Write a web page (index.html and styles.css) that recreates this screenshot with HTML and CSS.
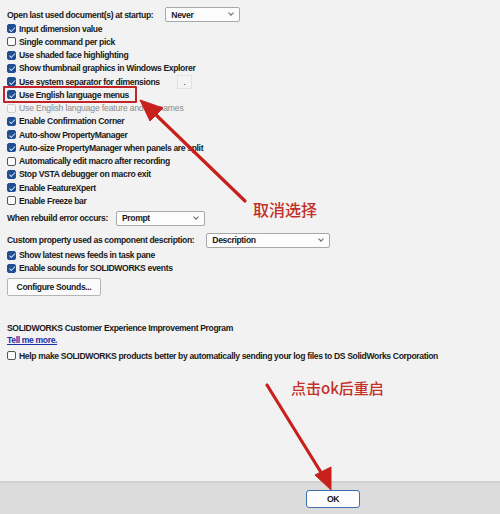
FILE: index.html
```html
<!DOCTYPE html>
<html>
<head>
<meta charset="utf-8">
<link rel="stylesheet" href="styles.css">
</head>
<body>
<div class="window">
  <div class="main">
    <div class="row field">
      <span class="label">Open last used document(s) at startup:</span>
      <span class="select sel-never">Never<span class="caret"></span></span>
    </div>
    <div class="row"><span class="cb on"></span>Input dimension value</div>
    <div class="row"><span class="cb"></span>Single command per pick</div>
    <div class="row"><span class="cb on"></span>Use shaded face highlighting</div>
    <div class="row"><span class="cb on"></span>Show thumbnail graphics in Windows Explorer</div>
    <div class="row"><span class="cb on"></span>Use system separator for dimensions<span class="sepbox">.</span></div>
    <div class="row"><span class="hl"><span class="cb on"></span>Use English language menus</span></div>
    <div class="row disabled"><span class="cb off"></span>Use English language feature and file names</div>
    <div class="row"><span class="cb on"></span>Enable Confirmation Corner</div>
    <div class="row"><span class="cb on"></span>Auto-show PropertyManager</div>
    <div class="row"><span class="cb on"></span>Auto-size PropertyManager when panels are split</div>
    <div class="row"><span class="cb"></span>Automatically edit macro after recording</div>
    <div class="row"><span class="cb on"></span>Stop VSTA debugger on macro exit</div>
    <div class="row"><span class="cb on"></span>Enable FeatureXpert</div>
    <div class="row"><span class="cb"></span>Enable Freeze bar</div>
    <div class="row field rebuild">
      <span class="label">When rebuild error occurs:</span>
      <span class="select sel-prompt">Prompt<span class="caret"></span></span>
    </div>
    <div class="row field custom">
      <span class="label">Custom property used as component description:</span>
      <span class="select sel-desc">Description<span class="caret"></span></span>
    </div>
    <div class="row"><span class="cb on"></span>Show latest news feeds in task pane</div>
    <div class="row"><span class="cb on"></span>Enable sounds for SOLIDWORKS events</div>
    <div class="btnrow"><span class="btn">Configure Sounds...</span></div>

    <div class="ceip">
      <div class="title">SOLIDWORKS Customer Experience Improvement Program</div>
      <div class="link">Tell me more.</div>
      <div class="row"><span class="cb"></span>Help make SOLIDWORKS products better by automatically sending your log files to DS SolidWorks Corporation</div>
    </div>
  </div>
  <div class="footer">
    <span class="ok">OK</span>
  </div>

  <div class="note note1">取消选择</div>
  <div class="note note2">点击ok后重启</div>
  <svg class="arrows" width="500" height="514" viewBox="0 0 500 514">
    <g fill="#c8201c" stroke="#c8201c">
      <line x1="245" y1="201" x2="153" y2="112" stroke-width="3.2" stroke-linecap="round"/>
      <polygon points="140,100 163,108 150,121" stroke-width="1" stroke-linejoin="round"/>
      <line x1="267" y1="385" x2="322" y2="474" stroke-width="3.2" stroke-linecap="round"/>
      <polygon points="331,490 315,475 331,467" stroke-width="1" stroke-linejoin="round"/>
    </g>
  </svg>
</div>
</body>
</html>
```
FILE: styles.css
```css
* { box-sizing: border-box; }
html, body { margin: 0; padding: 0; }
body {
  width: 500px;
  height: 514px;
  background: #f2f2f2;
  font-family: "Liberation Sans", Arial, sans-serif;
  font-size: 8.6px;
  font-weight: bold;
  letter-spacing: -0.36px;
  color: #1a1a1a;
  overflow: hidden;
}
.window {
  position: relative;
  width: 500px;
  height: 514px;
  display: flex;
  flex-direction: column;
}
.main {
  flex: 1;
  padding: 7px 0 0 7px;
  display: flex;
  flex-direction: column;
}
.row {
  display: flex;
  align-items: center;
  height: 13.25px;
  white-space: nowrap;
}
.cb {
  width: 9px;
  height: 9px;
  border-radius: 2px;
  border: 1px solid #555;
  background: #fafafa;
  margin-right: 3px;
  flex: none;
  position: relative;
}
.cb.on {
  background: #1f4f93;
  border-color: #1f4f93;
}
.cb.on::after {
  content: "";
  position: absolute;
  left: 2.5px;
  top: 0.5px;
  width: 2px;
  height: 4.5px;
  border: solid #dfe8f5;
  border-width: 0 1.2px 1.2px 0;
  transform: rotate(45deg);
}
.cb.off {
  border-color: #cfcfcf;
  background: #f6f6f6;
}
.disabled { color: #8a8a8a; font-weight: normal; letter-spacing: -0.15px; }
.field { height: 15px; }
.label { margin-right: 12px; }
.select {
  position: relative;
  display: inline-flex;
  align-items: center;
  height: 15px;
  padding-left: 5px;
  background: #fcfcfc;
  border: 1px solid #a8a8a8;
  border-radius: 2px;
}
.caret {
  position: absolute;
  right: 6px;
  top: 3px;
  width: 4px;
  height: 4px;
  border: solid #666;
  border-width: 0 1px 1px 0;
  transform: rotate(45deg);
}
.sel-never { width: 75px; }
.sel-prompt { width: 89px; }
.sel-desc { width: 124px; }
.sepbox {
  display: inline-block;
  width: 15px;
  height: 14px;
  margin-left: 17px;
  border: 1px solid #e2e2e2;
  background: #f4f4f4;
  text-align: center;
  line-height: 12px;
  font-weight: normal;
}
.hl {
  display: inline-flex;
  align-items: center;
  height: 17px;
  margin-left: -4px;
  padding: 0 6px 0 2px;
  border: 2px solid #c1242a;
  border-radius: 1px;
}
.rebuild { margin-top: 3px; }
.rebuild .label { margin-right: 8px; }
.custom { margin-top: 7px; margin-bottom: 1px; }
.custom .label { margin-right: 12px; }
.btnrow { margin-top: 3px; }
.btn {
  display: inline-flex;
  align-items: center;
  justify-content: center;
  width: 94px;
  height: 18px;
  border: 1px solid #b4b4b4;
  border-radius: 2px;
  background: #fbfbfb;
}
.ceip { margin-top: 26px; }
.title { height: 12px; line-height: 12px; }
.link {
  height: 12px;
  line-height: 12px;
  color: #1c2fa8;
  text-decoration: underline;
}
.ceip .row { margin-top: 3px; }
.footer {
  height: 33px;
  flex: none;
  background: #dcdcdc;
  border-top: 2px solid #d0d0d0;
  display: flex;
  justify-content: flex-start;
  padding: 7px 0 0 306px;
}
.ok {
  display: inline-flex;
  align-items: center;
  justify-content: center;
  width: 54px;
  height: 18px;
  border: 1.5px solid #3d6fae;
  border-radius: 3px;
  background: #fdfdfd;
  color: #111;
}
.note {
  position: absolute;
  color: #c23028;
  font-family: "Noto Sans CJK SC", sans-serif;
  font-weight: 500;
  font-size: 16px;
  letter-spacing: 0;
  line-height: 1;
  white-space: nowrap;
}
.note1 { left: 253px; top: 201px; }
.note2 { left: 291px; top: 380px; font-size: 15px; }
.arrows { position: absolute; left: 0; top: 0; pointer-events: none; }
```
